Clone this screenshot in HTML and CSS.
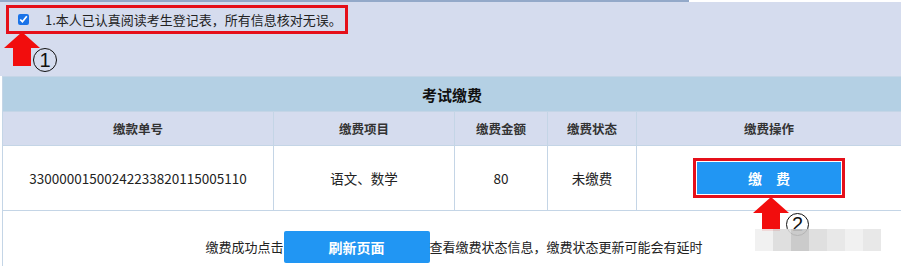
FILE: index.html
```html
<!DOCTYPE html>
<html lang="zh-CN">
<head>
  <meta charset="UTF-8">
  <meta name="viewport" content="width=device-width, initial-scale=1.0">
  <title>考试缴费</title>
  <link rel="stylesheet" href="styles.css">
</head>
<body>
  <div class="page">
    <div class="top-strip"><div class="top-line"></div></div>

    <div class="agree">
      <label class="agree-box">
        <input type="checkbox" checked>
        <span class="agree-text">1.本人已认真阅读考生登记表，所有信息核对无误。</span>
      </label>

      <!-- step marker 1 -->
      <svg class="arrow arrow-one" width="38" height="34" viewBox="0 0 38 34">
        <polygon points="19,0 37,16 28,16 28,34 10,34 10,16 1,16" fill="#f20d0d"/>
      </svg>
      <span class="step step-one">1</span>
    </div>

    <table class="pay-table">
      <colgroup>
        <col class="col-no">
        <col class="col-item">
        <col class="col-amount">
        <col class="col-state">
        <col class="col-op">
      </colgroup>
      <tr class="title-row">
        <th colspan="5">考试缴费</th>
      </tr>
      <tr class="head-row">
        <th>缴款单号</th>
        <th>缴费项目</th>
        <th>缴费金额</th>
        <th>缴费状态</th>
        <th>缴费操作</th>
      </tr>
      <tr class="data-row">
        <td>33000001500242233820115005110</td>
        <td>语文、数学</td>
        <td>80</td>
        <td>未缴费</td>
        <td class="op-cell">
          <span class="pay-wrap"><button class="btn pay-btn">缴　费</button></span>
          <!-- step marker 2 -->
          <svg class="arrow arrow-two" width="38" height="34" viewBox="0 0 38 34">
            <polygon points="19,0 37,16 28,16 28,34 10,34 10,16 1,16" fill="#f20d0d"/>
          </svg>
          <span class="step step-two">2</span>
        </td>
      </tr>
    </table>

    <div class="footer">
      <span>缴费成功点击</span>
      <button class="btn refresh-btn">刷新页面</button>
      <span>查看缴费状态信息，缴费状态更新可能会有延时</span>

      <div class="mosaic">
        <span class="m1"></span><span class="m2"></span><span class="m3"></span><span class="m2"></span><span class="m4"></span><span class="m1"></span><span class="m4"></span>
      </div>
    </div>
  </div>
</body>
</html>
```

FILE: styles.css
```css
body {
  margin: 0;
  background: #ffffff;
  font-family: "Noto Sans CJK SC", "Liberation Sans", sans-serif;
  font-size: 13px;
  color: #222;
}

.page {
  width: 901px;
  height: 266px;
  overflow: hidden;
}

.top-strip {
  height: 2px;
  background: #ffffff;
}

.top-line {
  width: 689px;
  height: 2px;
  background: #93a9c9;
}

.agree {
  position: relative;
  height: 74px;
  padding: 3px 0 0 6px;
  box-sizing: border-box;
  background: #d5dcee;
}

.agree-box {
  display: flex;
  align-items: center;
  width: 342px;
  height: 29px;
  box-sizing: border-box;
  border: 3px solid #e5101a;
  padding-left: 9px;
}

.agree-box input {
  width: 11px;
  height: 11px;
  margin: 0 16px 0 0;
  accent-color: #1a73e8;
}

.agree-text {
  font-size: 13px;
  color: #222;
}

.arrow {
  position: absolute;
}

.arrow-one {
  left: 3px;
  top: 30px;
}

.step {
  position: absolute;
  width: 22px;
  height: 22px;
  border: 1px solid #111;
  border-radius: 50%;
  display: flex;
  align-items: center;
  justify-content: center;
  font-family: "Liberation Sans", sans-serif;
  font-size: 20px;
  color: #111;
}

.step-one {
  left: 33px;
  top: 46px;
}

.pay-table {
  width: 899px;
  margin-left: 2px;
  border-collapse: collapse;
  table-layout: fixed;
}

.col-no { width: 271px; }
.col-item { width: 181px; }
.col-amount { width: 93px; }
.col-state { width: 89px; }
.col-op { width: 265px; }

.pay-table th,
.pay-table td {
  border: 1px solid #c4d5e6;
  text-align: center;
  padding: 0;
}

.title-row th {
  height: 34px;
  background: #b4d0e4;
  font-size: 15px;
  font-weight: bold;
  color: #111;
}

.head-row th {
  height: 33px;
  background: #d5dcee;
  font-size: 12.5px;
  font-weight: bold;
  color: #333;
}

.data-row td {
  height: 64px;
  background: #ffffff;
  font-size: 13.5px;
  color: #222;
}

.op-cell {
  position: relative;
}

.pay-wrap {
  display: inline-block;
  border: 3px solid #e5101a;
  padding: 1px;
  line-height: 0;
}

.btn {
  border: none;
  background: #2196f3;
  color: #ffffff;
  font-family: "Noto Sans CJK SC", "Liberation Sans", sans-serif;
  font-weight: bold;
  font-size: 14px;
  cursor: pointer;
}

.pay-btn {
  width: 144px;
  height: 32px;
}

.arrow-two {
  left: 115px;
  top: 51px;
}

.step-two {
  left: 149px;
  top: 67px;
  width: 21px;
  height: 21px;
}

.footer {
  position: relative;
  display: flex;
  align-items: center;
  justify-content: center;
  height: 55px;
  margin-left: 2px;
  border-left: 1px solid #c4d5e6;
  padding: 16px 0 0 4px;
  box-sizing: border-box;
  font-size: 13px;
}

.refresh-btn {
  width: 146px;
  height: 32px;
  border-radius: 2px;
}

.mosaic {
  position: absolute;
  left: 752px;
  top: 18px;
  display: flex;
  opacity: 0.9;
}

.mosaic span {
  width: 18px;
  height: 22px;
}

.mosaic .m1 { background: #f0f0f0; }
.mosaic .m2 { background: #dcdcdc; }
.mosaic .m3 { background: #c6c6c6; }
.mosaic .m4 { background: #e6e6e6; }
```
